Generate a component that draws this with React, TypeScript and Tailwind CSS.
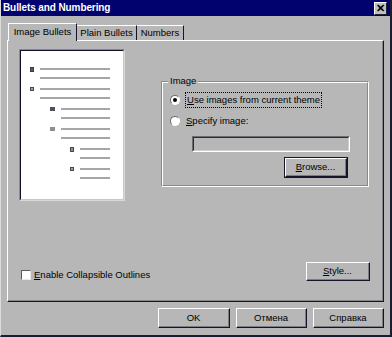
import React from "react";

function Raised({ className, children }: { className: string; children: React.ReactNode }) {
  return (
    <div className={`border-t border-l border-white border-r border-b border-r-[#14142a] border-b-[#14142a] ${className}`}>
      <div className="w-full h-full border-r border-b border-r-[#7c7c84] border-b-[#7c7c84] flex items-center justify-center">
        {children}
      </div>
    </div>
  );
}

function Item({ pl, w, bullet }: { pl: string; w: string; bullet: string }) {
  return (
    <div className={`flex items-start h-[20px] ${pl}`}>
      <div className={bullet} />
      <div className={`flex flex-col gap-[7px] ml-[6px] mt-[1px] ${w}`}>
        <div className="h-[2px] bg-[#a6a6a6]" />
        <div className="h-[2px] bg-[#a6a6a6]" />
      </div>
    </div>
  );
}

function Radio({ checked }: { checked?: boolean }) {
  return (
    <div className="w-[10px] h-[10px] rounded-full border-t border-l border-[#6a6a72] border-r border-b border-r-white border-b-white bg-white flex items-center justify-center">
      {checked && <div className="w-[4px] h-[4px] rounded-full bg-black" />}
    </div>
  );
}

export default function App() {
  return (
    <div className="w-[392px] h-[337px] bg-[#b7b7b7] flex flex-col border-l border-l-[#dcdcdc] border-r-2 border-r-[#1c1c30] border-b-2 border-b-[#1c1c30] font-['Liberation_Sans',Arial,sans-serif] text-[9.5px] leading-none text-black overflow-hidden">
      {/* title bar */}
      <div className="h-[16px] bg-[#02026e] flex items-center justify-between pl-[2px] pr-[3px] shrink-0">
        <span className="text-white font-bold text-[10px] tracking-[-0.1px]">Bullets and Numbering</span>
        <div className="w-[13px] h-[13px] bg-[#c0c0c0] border-t border-l border-white border-r border-b border-r-[#202030] border-b-[#202030] flex items-center justify-center">
          <span className="text-black font-bold text-[11px] leading-none">✕</span>
        </div>
      </div>

      <div className="flex flex-col pt-[7px]">
        {/* tabs */}
        <div className="flex items-end h-[17px] ml-[7px] relative z-10">
          <div className="h-[18px] -mb-px bg-[#b7b7b7] border-t border-l border-white border-r border-r-[#14142a] w-[69px] flex items-center justify-center pb-[1px]">
            Image Bullets
          </div>
          <div className="h-[15px] border-t border-white border-r border-r-[#14142a] w-[60px] flex items-center justify-center">
            Plain Bullets
          </div>
          <div className="h-[15px] border-t border-white border-r border-r-[#14142a] w-[47px] flex items-center justify-center">
            Numbers
          </div>
        </div>

        {/* panel */}
        <div className="ml-[6px] w-[377px] h-[262px] border-t border-l border-white border-r border-b border-r-[#14142a] border-b-[#14142a]">
          <div className="w-full h-full border-r border-b border-r-[#85858c] border-b-[#85858c] flex flex-col">
            <div className="flex items-start">
              {/* preview */}
              <div className="ml-[11px] mt-[8px] border-t border-l border-[#8a8a8a] border-r border-b border-r-[#d8d8d8] border-b-[#d8d8d8]">
                <div className="w-[104px] h-[150px] border-t border-l border-[#10102a] border-r border-b border-r-[#c8c8c8] border-b-[#c8c8c8] bg-white flex flex-col pt-[16px]">
                  <Item pl="pl-[9px]" w="w-[70px]" bullet="w-[4px] h-[5px] bg-[#585866] border border-[#3c3c48]" />
                  <Item pl="pl-[9px]" w="w-[70px]" bullet="w-[4px] h-[4px] bg-[#9a9aa0] border border-[#484854]" />
                  <Item pl="pl-[29px]" w="w-[49px]" bullet="w-[5px] h-[4px] bg-[#50505c]" />
                  <Item pl="pl-[29px]" w="w-[49px]" bullet="w-[5px] h-[4px] bg-[#8e8e96]" />
                  <Item pl="pl-[49px]" w="w-[30px]" bullet="w-[4px] h-[5px] bg-[#8a8a94] border border-[#484854]" />
                  <Item pl="pl-[49px]" w="w-[30px]" bullet="w-[4px] h-[4px] bg-[#9a9aa0] border border-[#484854]" />
                </div>
              </div>

              {/* group box */}
              <div className="ml-[36px] mt-[40px] relative w-[208px] h-[106px] border-t border-l border-[#8a8a8a] border-r border-b border-r-white border-b-white">
                <span className="absolute -top-[6px] left-[6px] px-[2px] bg-[#b7b7b7]">Image</span>
                <div className="w-full h-full border-t border-l border-white border-r border-b border-r-[#8a8a8a] border-b-[#8a8a8a] flex flex-col pl-[7px] pt-[10px]">
                  <div className="flex items-center h-[14px]">
                    <Radio checked />
                    <span className="ml-[5px] border border-dotted border-black px-[1px] py-[2px]">
                      <span className="underline">U</span>se images from current theme
                    </span>
                  </div>
                  <div className="flex items-center h-[14px] mt-[7px]">
                    <Radio />
                    <span className="ml-[6px]">
                      <span className="underline">S</span>pecify image:
                    </span>
                  </div>
                  <div className="ml-[22px] mt-[8px] w-[158px] h-[16px] border-t border-l border-[#6c6c74] border-r border-b border-r-white border-b-white">
                    <div className="w-full h-full border-t border-l border-[#2a2a3a] border-r border-b border-r-[#d0d0d0] border-b-[#d0d0d0] bg-[#b7b7b7]" />
                  </div>
                  <div className="ml-[114px] mt-[5px] w-[64px] h-[21px] border border-[#14142a]">
                    <Raised className="w-full h-full">
                      <span>
                        <span className="underline">B</span>rowse...
                      </span>
                    </Raised>
                  </div>
                </div>
              </div>
            </div>

            {/* bottom row of panel */}
            <div className="flex items-start justify-between mt-[61px]">
              <div className="flex items-center ml-[13px] mt-[8px]">
                <div className="w-[10px] h-[10px] bg-white border-t border-l border-[#5a5a64] border-r border-b border-r-[#e8e8e8] border-b-[#e8e8e8]" />
                <span className="ml-[3px]">
                  <span className="underline">E</span>nable Collapsible Outlines
                </span>
              </div>
              <Raised className="w-[64px] h-[19px] mr-[12px]">
                <span>
                  <span className="underline">S</span>tyle...
                </span>
              </Raised>
            </div>
          </div>
        </div>

        {/* dialog buttons */}
        <div className="flex justify-end gap-[6px] mt-[6px] mr-[6px]">
          <Raised className="w-[72px] h-[20px]">OK</Raised>
          <Raised className="w-[71px] h-[20px]">Отмена</Raised>
          <Raised className="w-[71px] h-[20px]">Справка</Raised>
        </div>
      </div>
    </div>
  );
}
